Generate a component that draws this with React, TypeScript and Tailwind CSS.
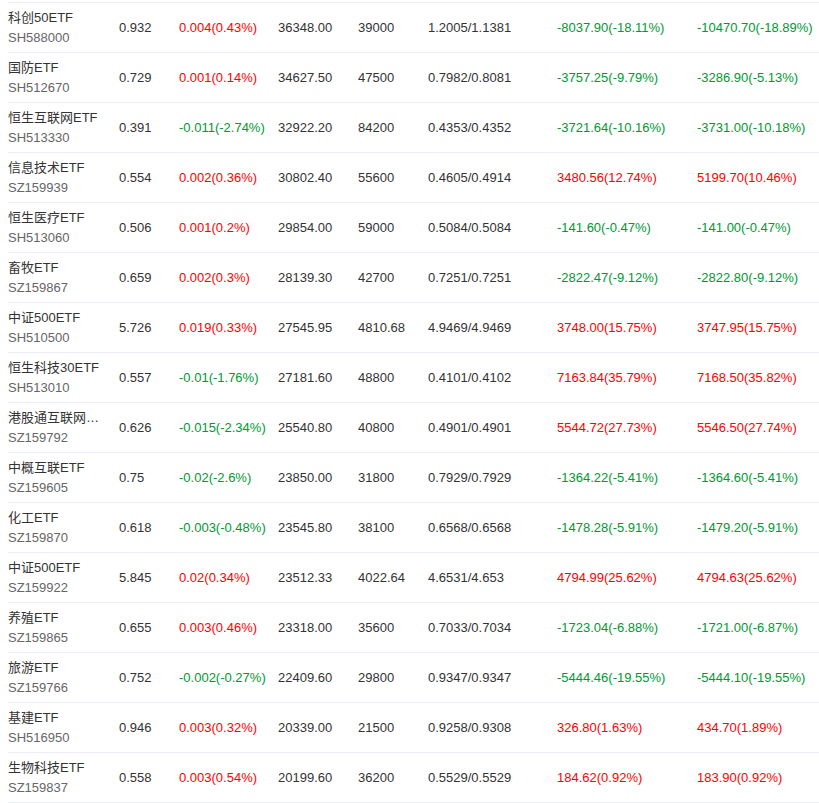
type Row = {
  name: string;
  code: string;
  price: string;
  change: string;
  amount: string;
  shares: string;
  nav: string;
  floating: string;
  total: string;
};

const rows: Row[] = [
  { name: "科创50ETF", code: "SH588000", price: "0.932", change: "0.004(0.43%)", amount: "36348.00", shares: "39000", nav: "1.2005/1.1381", floating: "-8037.90(-18.11%)", total: "-10470.70(-18.89%)" },
  { name: "国防ETF", code: "SH512670", price: "0.729", change: "0.001(0.14%)", amount: "34627.50", shares: "47500", nav: "0.7982/0.8081", floating: "-3757.25(-9.79%)", total: "-3286.90(-5.13%)" },
  { name: "恒生互联网ETF", code: "SH513330", price: "0.391", change: "-0.011(-2.74%)", amount: "32922.20", shares: "84200", nav: "0.4353/0.4352", floating: "-3721.64(-10.16%)", total: "-3731.00(-10.18%)" },
  { name: "信息技术ETF", code: "SZ159939", price: "0.554", change: "0.002(0.36%)", amount: "30802.40", shares: "55600", nav: "0.4605/0.4914", floating: "3480.56(12.74%)", total: "5199.70(10.46%)" },
  { name: "恒生医疗ETF", code: "SH513060", price: "0.506", change: "0.001(0.2%)", amount: "29854.00", shares: "59000", nav: "0.5084/0.5084", floating: "-141.60(-0.47%)", total: "-141.00(-0.47%)" },
  { name: "畜牧ETF", code: "SZ159867", price: "0.659", change: "0.002(0.3%)", amount: "28139.30", shares: "42700", nav: "0.7251/0.7251", floating: "-2822.47(-9.12%)", total: "-2822.80(-9.12%)" },
  { name: "中证500ETF", code: "SH510500", price: "5.726", change: "0.019(0.33%)", amount: "27545.95", shares: "4810.68", nav: "4.9469/4.9469", floating: "3748.00(15.75%)", total: "3747.95(15.75%)" },
  { name: "恒生科技30ETF", code: "SH513010", price: "0.557", change: "-0.01(-1.76%)", amount: "27181.60", shares: "48800", nav: "0.4101/0.4102", floating: "7163.84(35.79%)", total: "7168.50(35.82%)" },
  { name: "港股通互联网ETF", code: "SZ159792", price: "0.626", change: "-0.015(-2.34%)", amount: "25540.80", shares: "40800", nav: "0.4901/0.4901", floating: "5544.72(27.73%)", total: "5546.50(27.74%)" },
  { name: "中概互联ETF", code: "SZ159605", price: "0.75", change: "-0.02(-2.6%)", amount: "23850.00", shares: "31800", nav: "0.7929/0.7929", floating: "-1364.22(-5.41%)", total: "-1364.60(-5.41%)" },
  { name: "化工ETF", code: "SZ159870", price: "0.618", change: "-0.003(-0.48%)", amount: "23545.80", shares: "38100", nav: "0.6568/0.6568", floating: "-1478.28(-5.91%)", total: "-1479.20(-5.91%)" },
  { name: "中证500ETF", code: "SZ159922", price: "5.845", change: "0.02(0.34%)", amount: "23512.33", shares: "4022.64", nav: "4.6531/4.653", floating: "4794.99(25.62%)", total: "4794.63(25.62%)" },
  { name: "养殖ETF", code: "SZ159865", price: "0.655", change: "0.003(0.46%)", amount: "23318.00", shares: "35600", nav: "0.7033/0.7034", floating: "-1723.04(-6.88%)", total: "-1721.00(-6.87%)" },
  { name: "旅游ETF", code: "SZ159766", price: "0.752", change: "-0.002(-0.27%)", amount: "22409.60", shares: "29800", nav: "0.9347/0.9347", floating: "-5444.46(-19.55%)", total: "-5444.10(-19.55%)" },
  { name: "基建ETF", code: "SH516950", price: "0.946", change: "0.003(0.32%)", amount: "20339.00", shares: "21500", nav: "0.9258/0.9308", floating: "326.80(1.63%)", total: "434.70(1.89%)" },
  { name: "生物科技ETF", code: "SZ159837", price: "0.558", change: "0.003(0.54%)", amount: "20199.60", shares: "36200", nav: "0.5529/0.5529", floating: "184.62(0.92%)", total: "183.90(0.92%)" },
];

function tone(v: string) {
  return v.startsWith("-") ? "text-[#009933]" : "text-[#ff0000]";
}

export default function App() {
  return (
    <div
      className="bg-white w-[819px] h-[803px] overflow-hidden pt-[2px] pl-2 text-[13px] text-[#333]"
      style={{ fontFamily: '"Liberation Sans", Arial, "Noto Sans CJK SC", sans-serif' }}
    >
      <div className="border-t border-[#ebeef5]">
        {rows.map((r, i) => (
          <div
            key={i}
            className="grid grid-cols-[111px_60px_99px_80px_70px_129px_140px_1fr] h-[50px] border-b border-[#ebeef5] items-center whitespace-nowrap"
          >
            <div className="flex flex-col leading-5 pt-[1px]">
              <span className="w-[95px] truncate">{r.name}</span>
              <span className="text-[#666]">{r.code}</span>
            </div>
            <div>{r.price}</div>
            <div className={tone(r.change)}>{r.change}</div>
            <div>{r.amount}</div>
            <div>{r.shares}</div>
            <div>{r.nav}</div>
            <div className={tone(r.floating)}>{r.floating}</div>
            <div className={tone(r.total)}>{r.total}</div>
          </div>
        ))}
      </div>
    </div>
  );
}
